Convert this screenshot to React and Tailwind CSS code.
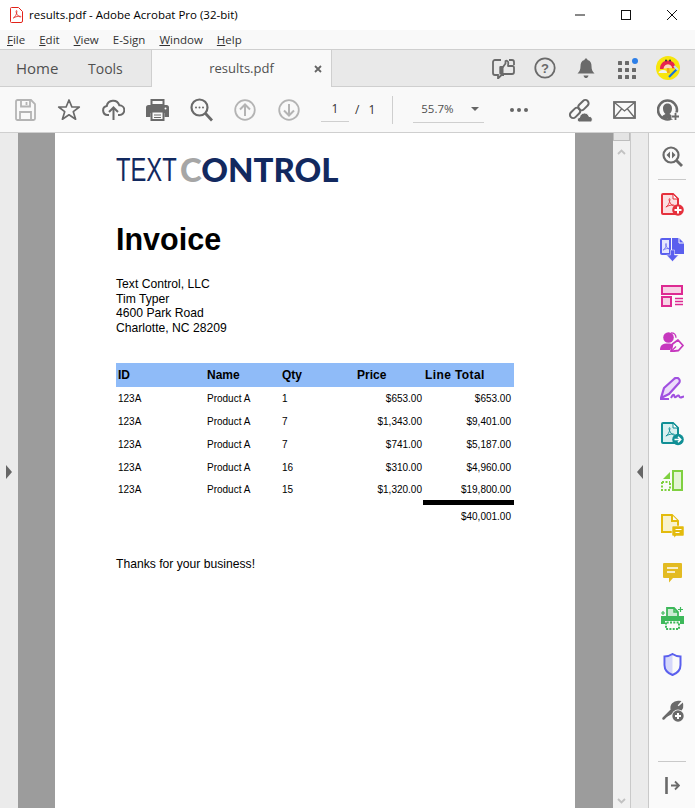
const ui = { fontFamily: '"Open Sans","Noto Sans",sans-serif' };
const doc = { fontFamily: '"Liberation Sans",Arial,sans-serif' };

const S = ({ w = 24, h = 24, vb, children }) => (
  <svg width={w} height={h} viewBox={vb || `0 0 ${w} ${h}`} fill="none" className="block shrink-0">{children}</svg>
);

const PdfMark = ({ c, x = 0, y = 0, s = 1, sw = 1 }) => (
  <path transform={`translate(${x} ${y}) scale(${s})`} d="M1 10c2-1 4-4 4.500-8 .3-1.800-1-1.800-1-.2 0 2 2 6 5 7 1 .3 1.500-.8.2-1-2-.3-6 .5-8.700 2.200z" stroke={c} strokeWidth={sw} fill="none" />
);

const gd = "#6a6a6a";

const Tb = ({ children }) => <div className="w-[44px] flex items-center justify-center">{children}</div>;

const Side = ({ children }) => <div className="h-[46px] w-full flex items-center justify-center">{children}</div>;

const rows = [
  ["1", "$653.00", "$653.00", "h-[23px]"],
  ["7", "$1,343.00", "$9,401.00", "h-[23px]"],
  ["7", "$741.00", "$5,187.00", "h-[23px]"],
  ["16", "$310.00", "$4,960.00", "h-[22px]"],
  ["15", "$1,320.00", "$19,800.00", "h-[22px]"],
];

export default function App() {
  return (
    <div className="w-[695px] h-[808px] overflow-hidden bg-white flex flex-col text-[#222]" style={ui}>
      {/* title bar */}
      <div className="h-[30px] shrink-0 flex items-center bg-white pl-[10px]">
        <S w={13} h={16}>
          <path d="M1.500.5h7l4 4v9.500a1.500 1.500 0 0 1-1.500 1.500H1.500A1 1 0 0 1 .5 14.500V1.500a1 1 0 0 1 1-1z" stroke="#e2231a" fill="#fff" />
          <PdfMark c="#e2231a" x={2.500} y={3} s={0.8} />
        </S>
        <span className="ml-[6px] text-[11.500px] text-black">results.pdf - Adobe Acrobat Pro (32-bit)</span>
        <div className="ml-auto flex items-center">
          <div className="w-[46px] h-[30px] flex items-center justify-center">
            <S w={10} h={10}><path d="M0 5h10" stroke="#111" /></S>
          </div>
          <div className="w-[46px] h-[30px] flex items-center justify-center">
            <S w={10} h={10}><rect x=".5" y=".5" width="9" height="9" stroke="#111" /></S>
          </div>
          <div className="w-[46px] h-[30px] flex items-center justify-center">
            <S w={10} h={10}><path d="M0 0l10 10M10 0L0 10" stroke="#111" /></S>
          </div>
        </div>
      </div>
      {/* menu */}
      <div className="h-[20px] shrink-0 bg-[#f9f9f9] flex items-center pl-[7px] gap-[14px] text-[11.500px] text-[#333] border-b border-[#cfcfcf]">
        <span><u>F</u>ile</span>
        <span><u>E</u>dit</span>
        <span><u>V</u>iew</span>
        <span>E-Sign</span>
        <span><u>W</u>indow</span>
        <span><u>H</u>elp</span>
      </div>
      {/* tabs */}
      <div className="h-[37px] shrink-0 bg-[#e9e9e9] flex items-stretch border-b border-[#cfcfcf]">
        <div className="w-[151px] flex items-center pl-[16px] text-[15px] text-[#505050]">
          <span className="w-[72px]">Home</span>
          <span className="text-[14px]">Tools</span>
        </div>
        <div className="w-[181px] -mb-px bg-[#f9f9f9] border-l border-r border-[#cfcfcf] flex items-center relative">
          <span className="w-full text-center text-[13px] text-[#505050]">results.pdf</span>
          <div className="absolute left-[162px] top-[15px]">
            <S w={8} h={8}><path d="M1 1l6 6M7 1L1 7" stroke="#666" strokeWidth="1.800" /></S>
          </div>
        </div>
        <div className="ml-auto flex items-center pr-[15px]">
          <S w={23} h={22}>
            <path d="M9 3H3A2 2 0 0 0 1 5v11a2 2 0 0 0 2 2h3v3.500L9.500 18H12" stroke={gd} strokeWidth="1.800" />
            <path d="M17 3h3a2 2 0 0 1 2 2v3" stroke={gd} strokeWidth="1.800" />
            <path d="M8.500 10H11l2.500-3.500V4c1.500-.8 2.800.5 2.800 2L16 9h4.500c1 0 1.500.7 1.500 1.500V15a2 2 0 0 1-2 2h-8.500l-3-1z" fill="#e9e9e9" stroke={gd} strokeWidth="1.800" strokeLinejoin="round" />
            <rect x="7.500" y="9.500" width="4" height="8" fill={gd} />
          </S>
          <div className="ml-[19px]">
            <S w={22} h={22}>
              <circle cx="11" cy="11" r="9.700" stroke={gd} strokeWidth="1.800" />
              <text x="11" y="15.500" textAnchor="middle" fontSize="13" fontWeight="700" fill={gd} style={doc}>?</text>
            </S>
          </div>
          <div className="ml-[21px]">
            <S w={18} h={22}>
              <path d="M9 1.500c1 0 1.500.7 1.500 1.500 3 .8 4 3 4 6 0 4 1 5.500 3 7.500H.5c2-2 3-3.500 3-7.500 0-3 1-5.200 4-6C7.500 2.200 8 1.500 9 1.500z" fill={gd} />
              <path d="M6.500 18.500h5c-.5 2-1.500 2.500-2.500 2.500s-2-.5-2.500-2.500z" fill={gd} />
            </S>
          </div>
          <div className="ml-[23px]">
            <S w={20} h={21}>
              {[[0, 3], [7, 3], [0, 10], [7, 10], [14, 10], [0, 17], [7, 17], [14, 17]].map(([x, y], i) => (
                <rect key={i} x={x} y={y} width="4" height="4" rx=".5" fill={gd} />
              ))}
              <circle cx="17" cy="3" r="3" fill="#2d7fe8" />
            </S>
          </div>
          <div className="ml-[18px]">
            <S w={24} h={24}>
              <circle cx="12" cy="12" r="12" fill="#f7e60d" />
              <path d="M4 13c0-5.500 3.500-8.500 8-8.500s7.500 3 7.500 7.500l-3 .5c-.5-2-2.500-4-4.500-4s-4 2-4.500 4.500z" fill="#e8244f" />
              <path d="M7.500 12.500c.5-2.500 2.200-4 4.500-4s3.700 1.500 4 3.500z" fill="#fbd5c0" />
              <circle cx="10" cy="4.500" r="1" fill="#333" />
              <circle cx="14" cy="4.500" r="1" fill="#333" />
              <path d="M2.500 17c.5-2.500 3-3.500 5-3 2 .2 3.500 1 3.500 3z" fill="#eef2f4" />
              <path d="M12 12l.5 5" stroke="#f2a71b" strokeWidth="2.500" />
              <path d="M13 21l8-8" stroke="#1874d8" strokeWidth="2.200" />
              <path d="M18 10l4 4" stroke="#bfe0f5" strokeWidth="2" />
            </S>
          </div>
        </div>
      </div>
      {/* toolbar */}
      <div className="h-[46px] shrink-0 bg-[#f9f9f9] flex items-center pl-[3px] border-b border-[#cfcfcf]">
        <Tb>
          <S w={21} h={22}>
            <path d="M1 2.500A1.500 1.500 0 0 1 2.500 1H16l4 4v14.500a1.500 1.500 0 0 1-1.500 1.500h-16A1.500 1.500 0 0 1 1 19.500z" stroke="#b4b4b4" strokeWidth="1.800" />
            <path d="M6 1.500v6h9v-6M11.500 3v3M5 21v-8h11v8" stroke="#b4b4b4" strokeWidth="1.800" />
          </S>
        </Tb>
        <Tb>
          <S w={24} h={24}>
            <path d="M12 2l2.900 7h7.400l-6 4.700 2.300 7.500L12 16.800l-6.600 4.400 2.300-7.500-6-4.700h7.400z" stroke={gd} strokeWidth="1.700" strokeLinejoin="round" />
          </S>
        </Tb>
        <Tb>
          <S w={23} h={23}>
            <path d="M7 17H5.500a4.500 4.500 0 0 1-.8-8.900 6.500 6.500 0 0 1 12.600-.8 4.800 4.800 0 0 1 .3 9.700H16" stroke={gd} strokeWidth="2" />
            <path d="M11.500 22V10.500M7 14l4.500-4.500L16 14" stroke={gd} strokeWidth="2" />
          </S>
        </Tb>
        <Tb>
          <S w={23} h={22}>
            <rect x="5.500" y="1" width="12" height="5" stroke={gd} strokeWidth="2" />
            <path d="M2.500 6h18A2.500 2.500 0 0 1 23 8.500V18h-4.500v-4h-14v4H0V8.500A2.500 2.500 0 0 1 2.500 6z" fill={gd} />
            <rect x="5.500" y="12.500" width="12" height="8.500" stroke={gd} strokeWidth="2" fill="#f9f9f9" />
            <path d="M8 16h7M8 18.500h7" stroke={gd} />
            <circle cx="19.500" cy="9.500" r="1" fill="#fff" />
          </S>
        </Tb>
        <Tb>
          <S w={23} h={24}>
            <circle cx="9.500" cy="9.500" r="8" stroke={gd} strokeWidth="2.200" />
            <path d="M15.500 15.500l6.500 7" stroke={gd} strokeWidth="2.800" />
            <circle cx="6" cy="9.500" r="1" fill={gd} />
            <circle cx="9.500" cy="9.500" r="1" fill={gd} />
            <circle cx="13" cy="9.500" r="1" fill={gd} />
          </S>
        </Tb>
        <Tb>
          <S w={22} h={22}>
            <circle cx="11" cy="11" r="9.800" stroke="#b4b4b4" strokeWidth="1.800" />
            <path d="M11 17V5.500M6 10.500l5-5 5 5" stroke="#b4b4b4" strokeWidth="2" />
          </S>
        </Tb>
        <Tb>
          <S w={22} h={22}>
            <circle cx="11" cy="11" r="9.800" stroke="#b4b4b4" strokeWidth="1.800" />
            <path d="M11 5v11.500M6 11.500l5 5 5-5" stroke="#b4b4b4" strokeWidth="2" />
          </S>
        </Tb>
        <div className="ml-[10px] w-[28px] h-[24px] border-b border-[#cfcfcf] flex items-center justify-center text-[12px] text-[#333]">1</div>
        <span className="ml-[6px] text-[12px] text-[#333]">/</span>
        <span className="ml-[9px] text-[12px] text-[#333]">1</span>
        <div className="ml-[17px] w-px h-[28px] bg-[#cfcfcf]" />
        <div className="ml-[20px] w-[71px] h-[27px] border-b border-[#cfcfcf] flex items-center pl-[8px] text-[11.500px] text-[#505050]">
          <span>55.7%</span>
          <span className="ml-[17px] w-0 h-0 border-l-[4px] border-r-[4px] border-t-[4px] border-l-transparent border-r-transparent border-t-[#666]" />
        </div>
        <div className="ml-[26px] flex gap-[3px]">
          <span className="w-[4px] h-[4px] rounded-full bg-[#666]" />
          <span className="w-[4px] h-[4px] rounded-full bg-[#666]" />
          <span className="w-[4px] h-[4px] rounded-full bg-[#666]" />
        </div>
        <div className="ml-[40px]">
          <S w={25} h={24}>
            <rect x="-1" y="9.500" width="12" height="6.500" rx="3.250" transform="rotate(-45 5 12.750) translate(0 3)" stroke={gd} strokeWidth="2" />
            <rect x="8" y="2.500" width="12" height="6.500" rx="3.250" transform="rotate(-45 14 5.750) translate(0 2)" stroke={gd} strokeWidth="2" />
            <path d="M11.500 24c-2.500 0-3-4 0-4.500.5-3 2.500-4.500 5-4.500s4 1.500 4.500 3.500c3.500-.5 4.500 4.500 1.500 5.500z" fill={gd} stroke="#f9f9f9" />
          </S>
        </div>
        <div className="ml-[20px]">
          <S w={23} h={18}>
            <rect x="1" y="1" width="21" height="16" stroke={gd} strokeWidth="1.800" />
            <path d="M1.500 1.500L11.500 10l10-8.500M1.500 16.500L8.500 8M21.500 16.500L14.500 8" stroke={gd} strokeWidth="1.300" />
          </S>
        </div>
        <div className="ml-[21px]">
          <S w={23} h={22}>
            <circle cx="10.500" cy="11" r="9.500" stroke={gd} strokeWidth="2.500" />
            <path d="M5 19.500c0-3.500 2-3.500 3.500-4.500-1.500-1-2.500-3-2.500-5.500C6 6 8 4.500 10.500 4.500S15 6 15 9.500c0 2.500-1 4.500-2.500 5.500 1.500 1 3.500 1 3.500 4.500" fill={gd} />
            <path d="M18.500 13.500v8M14.500 17.500h8" stroke="#f9f9f9" strokeWidth="5" />
            <path d="M18.500 14v7M15 17.500h7" stroke={gd} strokeWidth="1.800" />
          </S>
        </div>
      </div>
      {/* main */}
      <div className="flex-1 min-h-0 flex">
        <div className="w-[18px] bg-[#ebebeb] flex items-center justify-center pt-[2px]">
          <div className="w-0 h-0 border-t-[7px] border-b-[7px] border-l-[6px] border-t-transparent border-b-transparent border-l-[#666]" />
        </div>
        <div className="w-[595px] bg-[#9c9c9c] px-[37px] overflow-hidden">
          <div className="w-[520px] h-full bg-white px-[61px]" style={doc}>
            <div className="pt-[20px] h-[58px] flex items-start leading-none text-[33px] text-[#12295f]" style={{ fontFamily: '"Lato",sans-serif' }}>
              <span className="w-[64px] inline-block origin-left scale-x-[.72] whitespace-nowrap" style={{ fontFamily: '"Liberation Sans",sans-serif' }}>TEXT</span>
              <span className="whitespace-nowrap" style={{ fontWeight: 900 }}>
                <span className="text-[#a6a6a6]">C</span>ONTROL
              </span>
            </div>
            <h1 className="mt-[30px] text-[30.500px] leading-[36px] font-bold text-black">Invoice</h1>
            <div className="mt-[20px] text-[12.150px] leading-[14.600px] text-black">
              <div>Text Control, LLC</div>
              <div>Tim Typer</div>
              <div>4600 Park Road</div>
              <div>Charlotte, NC 28209</div>
            </div>
            <div className="mt-[28px] w-[398px] text-black">
              <div className="h-[24px] bg-[#8fbbf8] flex items-center text-[12px] font-bold">
                <span className="w-[91px] pl-[2px]">ID</span>
                <span className="w-[75px]">Name</span>
                <span className="w-[75px]">Qty</span>
                <span className="w-[68px]">Price</span>
                <span className="w-[89px] tracking-[0.4px] whitespace-nowrap">Line Total</span>
              </div>
              {rows.map((r, i) => (
                <div key={i} className={`${r[3]} flex items-center text-[10px]`}>
                  <span className="w-[91px] pl-[2px]">123A</span>
                  <span className="w-[75px]">Product A</span>
                  <span className="w-[50px]">{r[0]}</span>
                  <span className="w-[90px] text-right">{r[1]}</span>
                  <span className="w-[89px] text-right">{r[2]}</span>
                </div>
              ))}
              <div className="h-[5px] w-[91px] ml-auto bg-black" />
              <div className="h-[22px] flex items-center justify-end pr-[3px] text-[10px]">$40,001.00</div>
            </div>
            <p className="mt-[30px] text-[12.150px] leading-[14px] text-black">Thanks for your business!</p>
          </div>
        </div>
        {/* scrollbar */}
        <div className="w-[18px] bg-[#f1f1f1] border-r border-[#c9c9c9] flex flex-col items-center">
          <div className="w-full h-[8px] bg-[#e4e4e4] border border-t-0 border-[#bdbdbd]" />
          <div className="mt-[8px]">
            <S w={9} h={6}><path d="M1 5l3.500-3.500L8 5" stroke="#c2c2c2" strokeWidth="1.800" /></S>
          </div>
          <div className="mt-auto mb-[4px]">
            <S w={9} h={6}><path d="M1 1l3.500 3.500L8 1" stroke="#c2c2c2" strokeWidth="1.800" /></S>
          </div>
        </div>
        <div className="w-[18px] bg-[#ebebeb] border-r border-[#c9c9c9] flex items-center justify-center pt-[2px]">
          <div className="w-0 h-0 border-t-[7px] border-b-[7px] border-r-[6px] border-t-transparent border-b-transparent border-r-[#666]" />
        </div>
        {/* tool rail */}
        <div className="w-[46px] bg-[#fafafa] flex flex-col items-center pt-[11px]">
          <div className="h-[24px] flex items-center justify-center">
            <S w={21} h={21}>
              <circle cx="9" cy="9" r="7.500" stroke={gd} strokeWidth="2.200" />
              <path d="M14.500 14.500l5.500 5.500" stroke={gd} strokeWidth="2.800" />
              <path d="M8 5.500L4.500 9 8 12.500zM10 5.500l3.500 3.500-3.500 3.500z" fill={gd} />
            </S>
          </div>
          <div className="w-[28px] h-px bg-[#c9c9c9] mt-[11px] mb-[1px]" />
          <Side>
            <S w={23} h={23}>
              <path d="M2 1h10l5 5v15H2a1 1 0 0 1-1-1V2a1 1 0 0 1 1-1z" fill="#fbdfe1" stroke="#e5303c" strokeWidth="2" />
              <path d="M12 1v5h5z" fill="#fafafa" stroke="#e5303c" />
              <PdfMark c="#e5303c" x={4} y={5} s={0.9} />
              <circle cx="17" cy="17" r="5.800" fill="#e5303c" />
              <path d="M17 13.500v7M13.500 17h7" stroke="#fff" strokeWidth="2" />
            </S>
          </Side>
          <Side>
            <S w={24} h={24}>
              <path d="M2 1h8v15H2a1 1 0 0 1-1-1V2a1 1 0 0 1 1-1z" fill="#e6e7fd" stroke="#5a5fee" strokeWidth="2" />
              <PdfMark c="#5a5fee" x={2.500} y={5} s={0.7} />
              <path d="M12 0h7l5 5v11H12z" fill="#5a5fee" />
              <path d="M19 0v5h5" stroke="#fafafa" />
              <path d="M10.500 12h4v5h4l-6 6.500-6-6.500h4z" fill="#5a5fee" stroke="#fafafa" strokeWidth=".5" />
            </S>
          </Side>
          <Side>
            <S w={22} h={22}>
              <rect x="1" y="1" width="20" height="8" fill="#f7d3e6" stroke="#dd2a92" strokeWidth="2" />
              <rect x="1" y="12" width="9" height="9" fill="#f7d3e6" stroke="#dd2a92" strokeWidth="2" />
              <path d="M14 13.500h8M14 16.500h8M14 19.500h8" stroke="#dd2a92" strokeWidth="1.300" />
            </S>
          </Side>
          <Side>
            <S w={24} h={20}>
              <path d="M11 .8c3 0 5 2 5 5" stroke="#c637be" strokeWidth="1.300" />
              <circle cx="8.500" cy="5.500" r="5.300" fill="#c637be" />
              <path d="M0 18c0-5 2.500-6.500 8-6.500 2 0 3.500.3 5 1L10 18z" fill="#c637be" />
              <path d="M11 19.500l1.500-7.500 5.500-4 5 5.500-4.500 5z" fill="#fafafa" stroke="#c637be" strokeWidth="1.800" strokeLinejoin="round" />
              <path d="M11 19.500l5-5" stroke="#c637be" strokeWidth="1.300" />
            </S>
          </Side>
          <Side>
            <S w={25} h={23}>
              <path d="M1 21L4 11 14 2a3 3 0 0 1 5 4L9 17z" fill="#ecdcfa" stroke="#a050e0" strokeWidth="2.200" strokeLinejoin="round" />
              <path d="M0 22h9" stroke="#a050e0" strokeWidth="2" />
              <path d="M11 21c1.500-3 2.500-4 3-3s.5 3 2 2 1.500-2 2.500-1.500.5 2 2 2 2-1 3.500-1" stroke="#a050e0" strokeWidth="2" />
            </S>
          </Side>
          <Side>
            <S w={23} h={24}>
              <path d="M2 1h10l5 5v15H2a1 1 0 0 1-1-1V2a1 1 0 0 1 1-1z" fill="#d9f0f0" stroke="#108f95" strokeWidth="2" />
              <path d="M12 1v5h5z" fill="#fafafa" stroke="#108f95" />
              <PdfMark c="#108f95" x={4} y={5} s={0.9} />
              <circle cx="17" cy="17.500" r="5.800" fill="#108f95" />
              <path d="M13.500 17.500h6M17 14.800l2.700 2.700-2.700 2.700" stroke="#fff" strokeWidth="1.600" />
            </S>
          </Side>
          <Side>
            <S w={22} h={21}>
              <rect x="12" y="1" width="9" height="19" fill="#e3f5d5" stroke="#7fd040" strokeWidth="2" />
              <path d="M1 12h8M1 12v8h8v-8" stroke="#7fd040" strokeWidth="2" strokeDasharray="2 1.500" />
              <path d="M9 9V2L2 9z" fill="#7fd040" />
            </S>
          </Side>
          <Side>
            <S w={23} h={24}>
              <path d="M1 1h10l6 6v11H1z" fill="#f8f2cc" stroke="#e3bb0d" strokeWidth="2" />
              <path d="M11 1v6h6" stroke="#e3bb0d" strokeWidth="2" fill="#fafafa" />
              <path d="M12 12h10a1 1 0 0 1 1 1v8a1 1 0 0 1-1 1h-7l-2 2v-2h-1a1 1 0 0 1-1-1v-8a1 1 0 0 1 1-1z" fill="#e3bb0d" stroke="#fafafa" strokeWidth=".5" />
              <path d="M14.500 15.500h6M14.500 18.500h4" stroke="#fff" />
            </S>
          </Side>
          <Side>
            <S w={21} h={21}>
              <path d="M2 1h17a1 1 0 0 1 1 1v13a1 1 0 0 1-1 1H11l-4 4.500V16H2a1 1 0 0 1-1-1V2a1 1 0 0 1 1-1z" fill="#e3bb22" />
              <path d="M5 6h11M5 10h8" stroke="#fff" strokeWidth="1.500" />
            </S>
          </Side>
          <Side>
            <S w={23} h={24}>
              <path d="M6 13V2h7l4 4v7z" fill="#cdebd3" stroke="#3db85a" strokeWidth="1.800" />
              <path d="M13 2v4h4" stroke="#3db85a" strokeWidth="1.500" />
              <path d="M0 10h23v8h-4v-3H4v3H0z" fill="#3db85a" />
              <path d="M5 16.500v6.500h13v-6.500h-13" stroke="#3db85a" strokeWidth="2" strokeDasharray="2 1.300" />
              <path d="M19.500 1v5M17 3.500h5M2 5v4M0 7h4" stroke="#3db85a" strokeWidth="1.200" />
            </S>
          </Side>
          <Side>
            <S w={19} h={23}>
              <path d="M9.500 2c-3 1.500-5 2-7 2.300V12c0 4 3.500 7.500 7 9z" fill="#d5d7fa" />
              <path d="M9.500 1c3 2 5.500 2.500 8 2.500v8.500c0 5-4 8.500-8 10-4-1.500-8-5-8-10V3.500c2.500 0 5-.5 8-2.500z" stroke="#5a5fee" strokeWidth="2" />
            </S>
          </Side>
          <Side>
            <S w={23} h={23}>
              <path d="M2.500 19.500L11 11c-1.500-4.500 2-8.500 7-8l-3 3.500 2.500 2.500L21 6c.5 3.500-2 6-4 6" fill={gd} stroke={gd} strokeWidth="2.500" strokeLinecap="round" />
              <circle cx="17" cy="17" r="6.500" fill="#fafafa" />
              <circle cx="17" cy="17" r="5.700" fill={gd} />
              <path d="M17 14v6M14 17h6" stroke="#fff" strokeWidth="2" />
            </S>
          </Side>
          <div className="w-[28px] h-px bg-[#c9c9c9] mt-[28px]" />
          <div className="mt-[15px]">
            <S w={15} h={17}>
              <path d="M1.500 0v16.500" stroke={gd} strokeWidth="2.600" strokeLinecap="round" />
              <path d="M6 8.500h8M10 4.500l4 4-4 4" stroke={gd} strokeWidth="1.800" />
            </S>
          </div>
        </div>
      </div>
    </div>
  );
}
